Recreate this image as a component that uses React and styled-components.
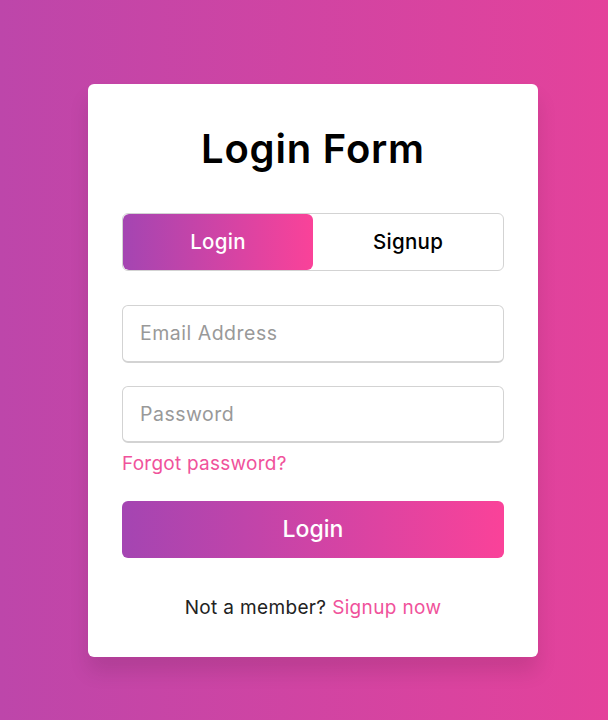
import React, { useState } from 'react';
import styled, { createGlobalStyle } from 'styled-components';

const GlobalStyle = createGlobalStyle`
  * {
    margin: 0;
    padding: 0;
    box-sizing: border-box;
  }
  body {
    font-family: Inter, "Noto Sans", sans-serif;
    background: linear-gradient(to right, #bd46aa, #e4429b);
    min-height: 720px;
  }
`;

const Page = styled.div`
  display: flex;
  align-items: flex-start;
  padding: 84px 0 0 88px;
  min-height: 720px;
`;

const Wrapper = styled.div`
  display: flex;
  flex-direction: column;
  width: 450px;
  background: #fff;
  padding: 34.5px 34px 35px;
  border-radius: 6px;
  box-shadow: 0 15px 20px rgba(0, 0, 0, 0.1);
`;

const Title = styled.h1`
  font-size: 40px;
  font-weight: 600;
  line-height: 60px;
  text-align: center;
  color: #000;
  letter-spacing: 0.8px;
`;

const SlideControls = styled.div`
  position: relative;
  display: flex;
  height: 57.5px;
  margin: 34.5px 0 11.5px;
  border: 1px solid lightgrey;
  border-radius: 6px;
  overflow: hidden;
`;

const SliderTab = styled.div`
  position: absolute;
  top: 0;
  left: ${p => (p.$right ? '50%' : '0')};
  width: 50%;
  height: 100%;
  border-radius: 6px;
  background: linear-gradient(to right, #a445b2, #fa4299);
`;

const Slide = styled.label`
  position: relative;
  z-index: 1;
  flex: 1;
  display: flex;
  align-items: center;
  justify-content: center;
  font-size: 20.5px;
  font-weight: 500;
  letter-spacing: 0.3px;
  color: ${p => (p.$active ? '#fff' : '#000')};
  cursor: pointer;
`;

const Form = styled.form`
  display: flex;
  flex-direction: column;
`;

const Field = styled.div`
  height: 57.5px;
  margin-top: 23px;
`;

const Input = styled.input`
  width: 100%;
  height: 100%;
  padding-left: 17px;
  font-family: inherit;
  font-size: 19.5px;
  letter-spacing: 0.5px;
  border: 1px solid lightgrey;
  border-bottom-width: 2px;
  border-radius: 6px;
  outline: none;
  color: #333;
  &::placeholder {
    color: #999;
  }
`;

const PassLink = styled.div`
  margin-top: 5.5px;
  font-size: 19px;
  line-height: 29px;
  letter-spacing: 0.25px;
`;

const Link = styled.a`
  color: #f0529b;
  text-decoration: none;
`;

const SubmitButton = styled.button`
  width: 100%;
  height: 57.5px;
  margin-top: 23px;
  border: none;
  border-radius: 6px;
  background: linear-gradient(to right, #a445b2, #fa4299);
  color: #fff;
  font-family: inherit;
  font-size: 23px;
  font-weight: 500;
  cursor: pointer;
`;

const SignupLink = styled.div`
  margin-top: 34.5px;
  text-align: center;
  font-size: 19px;
  line-height: 29px;
  letter-spacing: 0.35px;
  color: #222;
`;

export default function App() {
  const [mode, setMode] = useState('login');
  return (
    <>
      <GlobalStyle />
      <Page>
        <Wrapper>
          <Title>Login Form</Title>
          <SlideControls>
            <SliderTab $right={mode === 'signup'} />
            <Slide $active={mode === 'login'} onClick={() => setMode('login')}>
              Login
            </Slide>
            <Slide $active={mode === 'signup'} onClick={() => setMode('signup')}>
              Signup
            </Slide>
          </SlideControls>
          <Form onSubmit={e => e.preventDefault()}>
            <Field>
              <Input type="text" placeholder="Email Address" />
            </Field>
            <Field>
              <Input type="password" placeholder="Password" />
            </Field>
            <PassLink>
              <Link href="#">Forgot password?</Link>
            </PassLink>
            <SubmitButton type="submit">Login</SubmitButton>
            <SignupLink>
              Not a member? <Link href="#">Signup now</Link>
            </SignupLink>
          </Form>
        </Wrapper>
      </Page>
    </>
  );
}
